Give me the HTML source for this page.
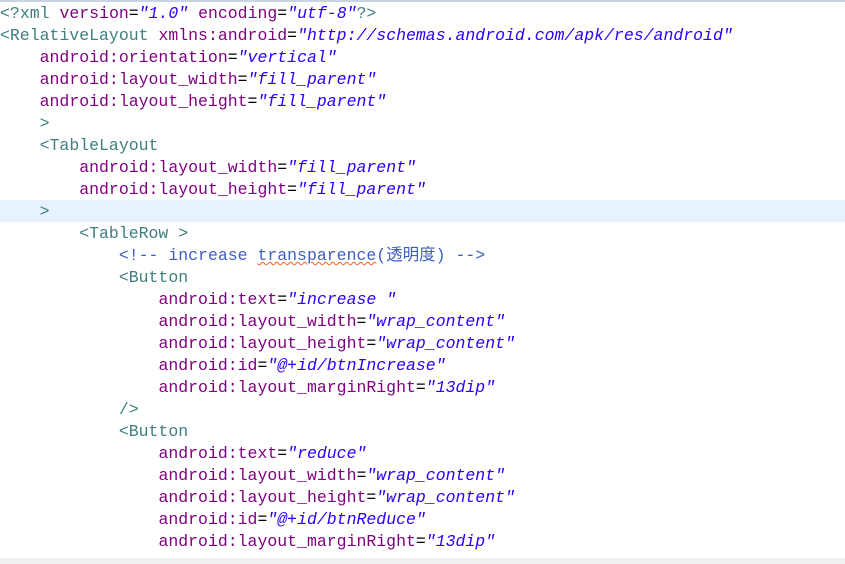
<!DOCTYPE html><html><head><style>
body{margin:0;width:845px;height:564px;overflow:hidden;background:#fff;position:relative;font-family:"Liberation Mono","Noto Sans CJK SC",monospace;font-size:16.5px}
.top{position:absolute;top:0;left:0;width:845px;height:2px;background:#c8d4e4}
.hl{position:absolute;top:200px;left:0;width:845px;height:22px;background:#e8f2fe}
pre{position:absolute;top:3px;left:0;margin:0;font:inherit;line-height:22px;white-space:pre}
.t{color:#3f7f7f}.a{color:#7f007f}.v{color:#2a00ff;font-style:italic}.c{color:#3f5fbf}
.u{text-decoration:underline wavy #f06020;text-decoration-thickness:1px}
.bot{position:absolute;bottom:0;left:0;width:845px;height:6px;background:#f0f0f0}
</style></head><body><div class="top"></div><div class="hl"></div>
<pre><span class="t">&lt;?</span><span class="t">xml</span> <span class="a">version</span>=<span class="v">"1.0"</span> <span class="a">encoding</span>=<span class="v">"utf-8"</span><span class="t">?&gt;</span>
<span class="t">&lt;RelativeLayout</span> <span class="a">xmlns:android</span>=<span class="v">"http://schemas.android.com/apk/res/android"</span>
    <span class="a">android:orientation</span>=<span class="v">"vertical"</span>
    <span class="a">android:layout_width</span>=<span class="v">"fill_parent"</span>
    <span class="a">android:layout_height</span>=<span class="v">"fill_parent"</span>
    <span class="t">&gt;</span>
    <span class="t">&lt;TableLayout</span>
        <span class="a">android:layout_width</span>=<span class="v">"fill_parent"</span>
        <span class="a">android:layout_height</span>=<span class="v">"fill_parent"</span>
    <span class="t">&gt;</span>
        <span class="t">&lt;TableRow &gt;</span>
            <span class="c">&lt;!-- increase <span class="u">transparence</span>(透明度) --&gt;</span>
            <span class="t">&lt;Button</span>
                <span class="a">android:text</span>=<span class="v">"increase "</span>
                <span class="a">android:layout_width</span>=<span class="v">"wrap_content"</span>
                <span class="a">android:layout_height</span>=<span class="v">"wrap_content"</span>
                <span class="a">android:id</span>=<span class="v">"@+id/btnIncrease"</span>
                <span class="a">android:layout_marginRight</span>=<span class="v">"13dip"</span>
            <span class="t">/&gt;</span>
            <span class="t">&lt;Button</span>
                <span class="a">android:text</span>=<span class="v">"reduce"</span>
                <span class="a">android:layout_width</span>=<span class="v">"wrap_content"</span>
                <span class="a">android:layout_height</span>=<span class="v">"wrap_content"</span>
                <span class="a">android:id</span>=<span class="v">"@+id/btnReduce"</span>
                <span class="a">android:layout_marginRight</span>=<span class="v">"13dip"</span>
</pre><div class="bot"></div></body></html>
